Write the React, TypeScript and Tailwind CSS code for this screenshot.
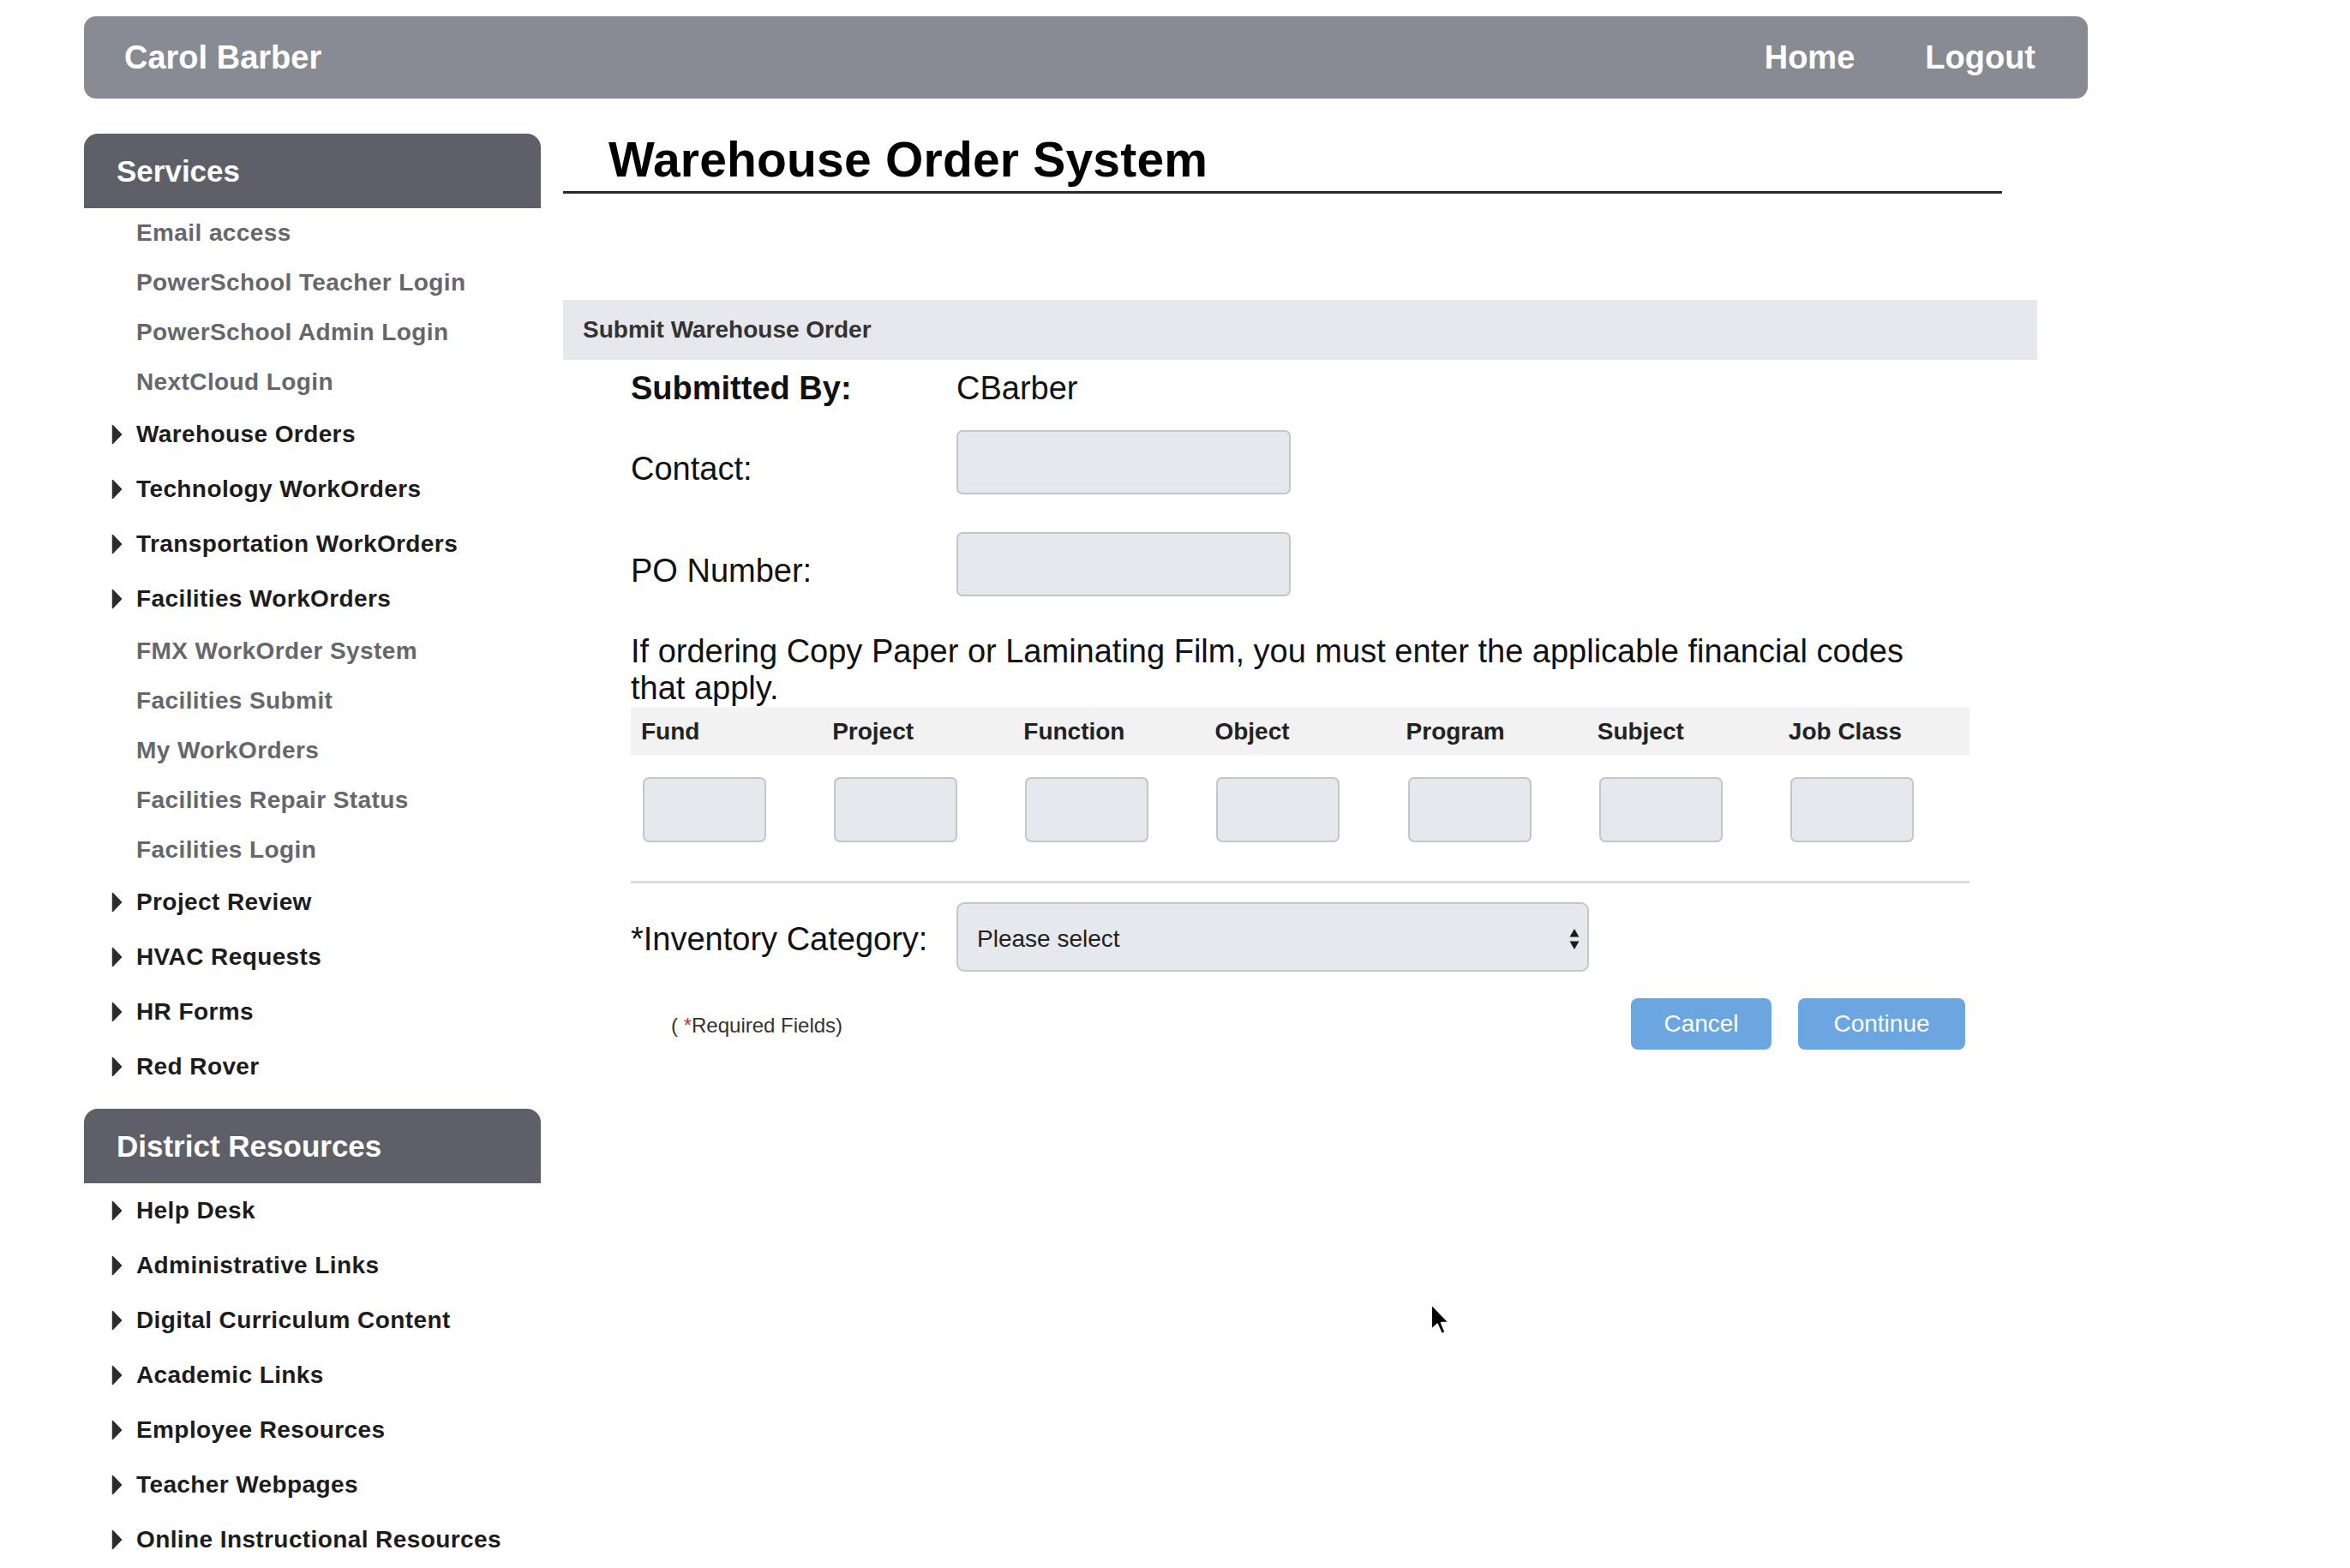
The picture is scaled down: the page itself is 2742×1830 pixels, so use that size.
import React from "react";

const serviceItems: { label: string; arrow: boolean }[] = [
  { label: "Email access", arrow: false },
  { label: "PowerSchool Teacher Login", arrow: false },
  { label: "PowerSchool Admin Login", arrow: false },
  { label: "NextCloud Login", arrow: false },
  { label: "Warehouse Orders", arrow: true },
  { label: "Technology WorkOrders", arrow: true },
  { label: "Transportation WorkOrders", arrow: true },
  { label: "Facilities WorkOrders", arrow: true },
  { label: "FMX WorkOrder System", arrow: false },
  { label: "Facilities Submit", arrow: false },
  { label: "My WorkOrders", arrow: false },
  { label: "Facilities Repair Status", arrow: false },
  { label: "Facilities Login", arrow: false },
  { label: "Project Review", arrow: true },
  { label: "HVAC Requests", arrow: true },
  { label: "HR Forms", arrow: true },
  { label: "Red Rover", arrow: true },
];

const districtItems = [
  "Help Desk",
  "Administrative Links",
  "Digital Curriculum Content",
  "Academic Links",
  "Employee Resources",
  "Teacher Webpages",
  "Online Instructional Resources",
];

const codeColumns = ["Fund", "Project", "Function", "Object", "Program", "Subject", "Job Class"];

const Arrow = () => (
  <svg width="13" height="24" viewBox="0 0 13 24" className="shrink-0">
    <path d="M1.5 1.5 L11.5 12 L1.5 22.5 Z" fill="#2c2c30" stroke="#2c2c30" strokeWidth="1.5" strokeLinejoin="round" />
  </svg>
);

const MenuItem = ({ label, arrow }: { label: string; arrow: boolean }) => {
  if (!arrow) {
    return (
      <div className="h-[58px] flex items-center pl-[61px] text-[28px] font-bold tracking-[0.4px] text-[#66676d] leading-none">
        {label}
      </div>
    );
  }
  return (
    <div className="h-[64px] flex items-center pl-[32px] text-[28px] font-bold tracking-[0.4px] text-[#1c1c1e] leading-none">
      <Arrow />
      <span className="ml-[16px]">{label}</span>
    </div>
  );
};

const SideHeader = ({ title }: { title: string }) => (
  <div className="h-[87px] bg-[#5e5f67] rounded-t-[16px] flex items-center pl-[38px] pt-[2px] text-white text-[35px] font-bold">
    {title}
  </div>
);

const Sidebar = () => (
  <aside className="w-[533px] shrink-0 flex flex-col">
    <SideHeader title="Services" />
    <div className="flex flex-col">
      {serviceItems.map((item) => (
        <MenuItem key={item.label} label={item.label} arrow={item.arrow} />
      ))}
    </div>
    <div className="mt-[17px]">
      <SideHeader title="District Resources" />
    </div>
    <div className="flex flex-col">
      {districtItems.map((label) => (
        <MenuItem key={label} label={label} arrow={true} />
      ))}
    </div>
  </aside>
);

const TextInput = ({ className }: { className: string }) => (
  <input
    type="text"
    className={
      "bg-[#e5e8ed] border-2 border-[#c4c6ca] rounded-[7px] outline-none " + className
    }
  />
);

const OrderForm = () => (
  <div className="px-[79px] text-[38px] text-[#111] leading-none">
    <div className="grid grid-cols-[380px_1fr] items-center h-[66px]">
      <div className="font-bold">Submitted By:</div>
      <div>CBarber</div>
    </div>

    <div className="grid grid-cols-[380px_1fr] items-center mt-[16px]">
      <div className="mt-[14px]">Contact:</div>
      <TextInput className="w-[390px] h-[75px]" />
    </div>

    <div className="grid grid-cols-[380px_1fr] items-center mt-[44px]">
      <div className="mt-[14px]">PO Number:</div>
      <TextInput className="w-[390px] h-[75px]" />
    </div>

    <p className="mt-[43px] leading-[43px] w-[1540px]">
      If ordering Copy Paper or Laminating Film, you must enter the applicable financial codes
      that apply.
    </p>

    <div className="grid grid-cols-7 h-[56px] bg-[#f2f2f2] items-center">
      {codeColumns.map((c) => (
        <div key={c} className="pl-[12px] pt-[2px] text-[28px] font-bold text-[#222]">
          {c}
        </div>
      ))}
    </div>
    <div className="grid grid-cols-7 pt-[26px]">
      {codeColumns.map((c) => (
        <div key={c} className="pl-[14px]">
          <TextInput className="w-[144px] h-[76px]" />
        </div>
      ))}
    </div>

    <div className="mt-[45px] h-[3px] bg-[#dcdcde]" />

    <div className="grid grid-cols-[380px_1fr] items-center mt-[22px]">
      <div className="mt-[4px]">*Inventory Category:</div>
      <div className="relative w-[738px] h-[81px] bg-[#e5e8ed] border-2 border-[#c4c6ca] rounded-[9px] flex items-center pl-[22px] pt-[4px] text-[28px] text-[#222]">
        Please select
        <svg
          width="14"
          height="26"
          viewBox="0 0 14 26"
          className="absolute right-[8px] top-[28px]"
        >
          <path d="M7 1 L12.5 10.5 L1.5 10.5 Z" fill="#1a1a1a" />
          <path d="M7 25 L12.5 15.5 L1.5 15.5 Z" fill="#1a1a1a" />
        </svg>
      </div>
    </div>

    <div className="flex items-center mt-[31px] h-[60px]">
      <div className="ml-[47px] mt-[4px] text-[24px] text-[#333]">
        ( <span className="text-[#e0282e]">*</span>Required Fields)
      </div>
      <div className="ml-auto mr-[5px] flex gap-[31px]">
        <button className="w-[164px] h-[60px] bg-[#6ca6e1] rounded-[8px] text-white text-[28px]">
          Cancel
        </button>
        <button className="w-[195px] h-[60px] bg-[#6ca6e1] rounded-[8px] text-white text-[28px]">
          Continue
        </button>
      </div>
    </div>
  </div>
);

const MainPanel = () => (
  <main className="w-[1720px] ml-[26px] flex flex-col">
    <h1 className="mr-[41px] pl-[53px] pt-[2px] pb-[8px] border-b-[3px] border-[#2b2b2b] text-[57px] font-bold leading-[57px] tracking-[0.2px] text-black">
      Warehouse Order System
    </h1>
    <div className="mt-[124px] h-[70px] bg-[#e6e8ee] flex items-center pl-[23px] text-[28px] font-bold text-[#333]">
      Submit Warehouse Order
    </div>
    <OrderForm />
  </main>
);

const Cursor = () => (
  <svg
    width="26"
    height="40"
    viewBox="0 0 13 20"
    className="absolute left-[1668px] top-[1520px]"
  >
    <path
      d="M1 1 L1 16 L4.5 12.7 L7 18.5 L9.3 17.5 L6.9 11.9 L11.5 11.9 Z"
      fill="#000"
      stroke="#fff"
      strokeWidth="1"
      strokeLinejoin="round"
    />
  </svg>
);

export default function App() {
  return (
    <div
      className="relative w-[2742px] h-[1830px] bg-white overflow-hidden pl-[98px] pt-[19px]"
      style={{ fontFamily: '"Liberation Sans", Arial, Helvetica, sans-serif' }}
    >
      <header className="w-[2338px] h-[96px] bg-[#898b93] rounded-[14px] flex items-center pl-[47px] pr-[61px] text-white text-[38px] font-bold">
        <span>Carol Barber</span>
        <nav className="ml-auto flex gap-[82px]">
          <span>Home</span>
          <span>Logout</span>
        </nav>
      </header>
      <div className="flex mt-[41px]">
        <Sidebar />
        <MainPanel />
      </div>
      <Cursor />
    </div>
  );
}
